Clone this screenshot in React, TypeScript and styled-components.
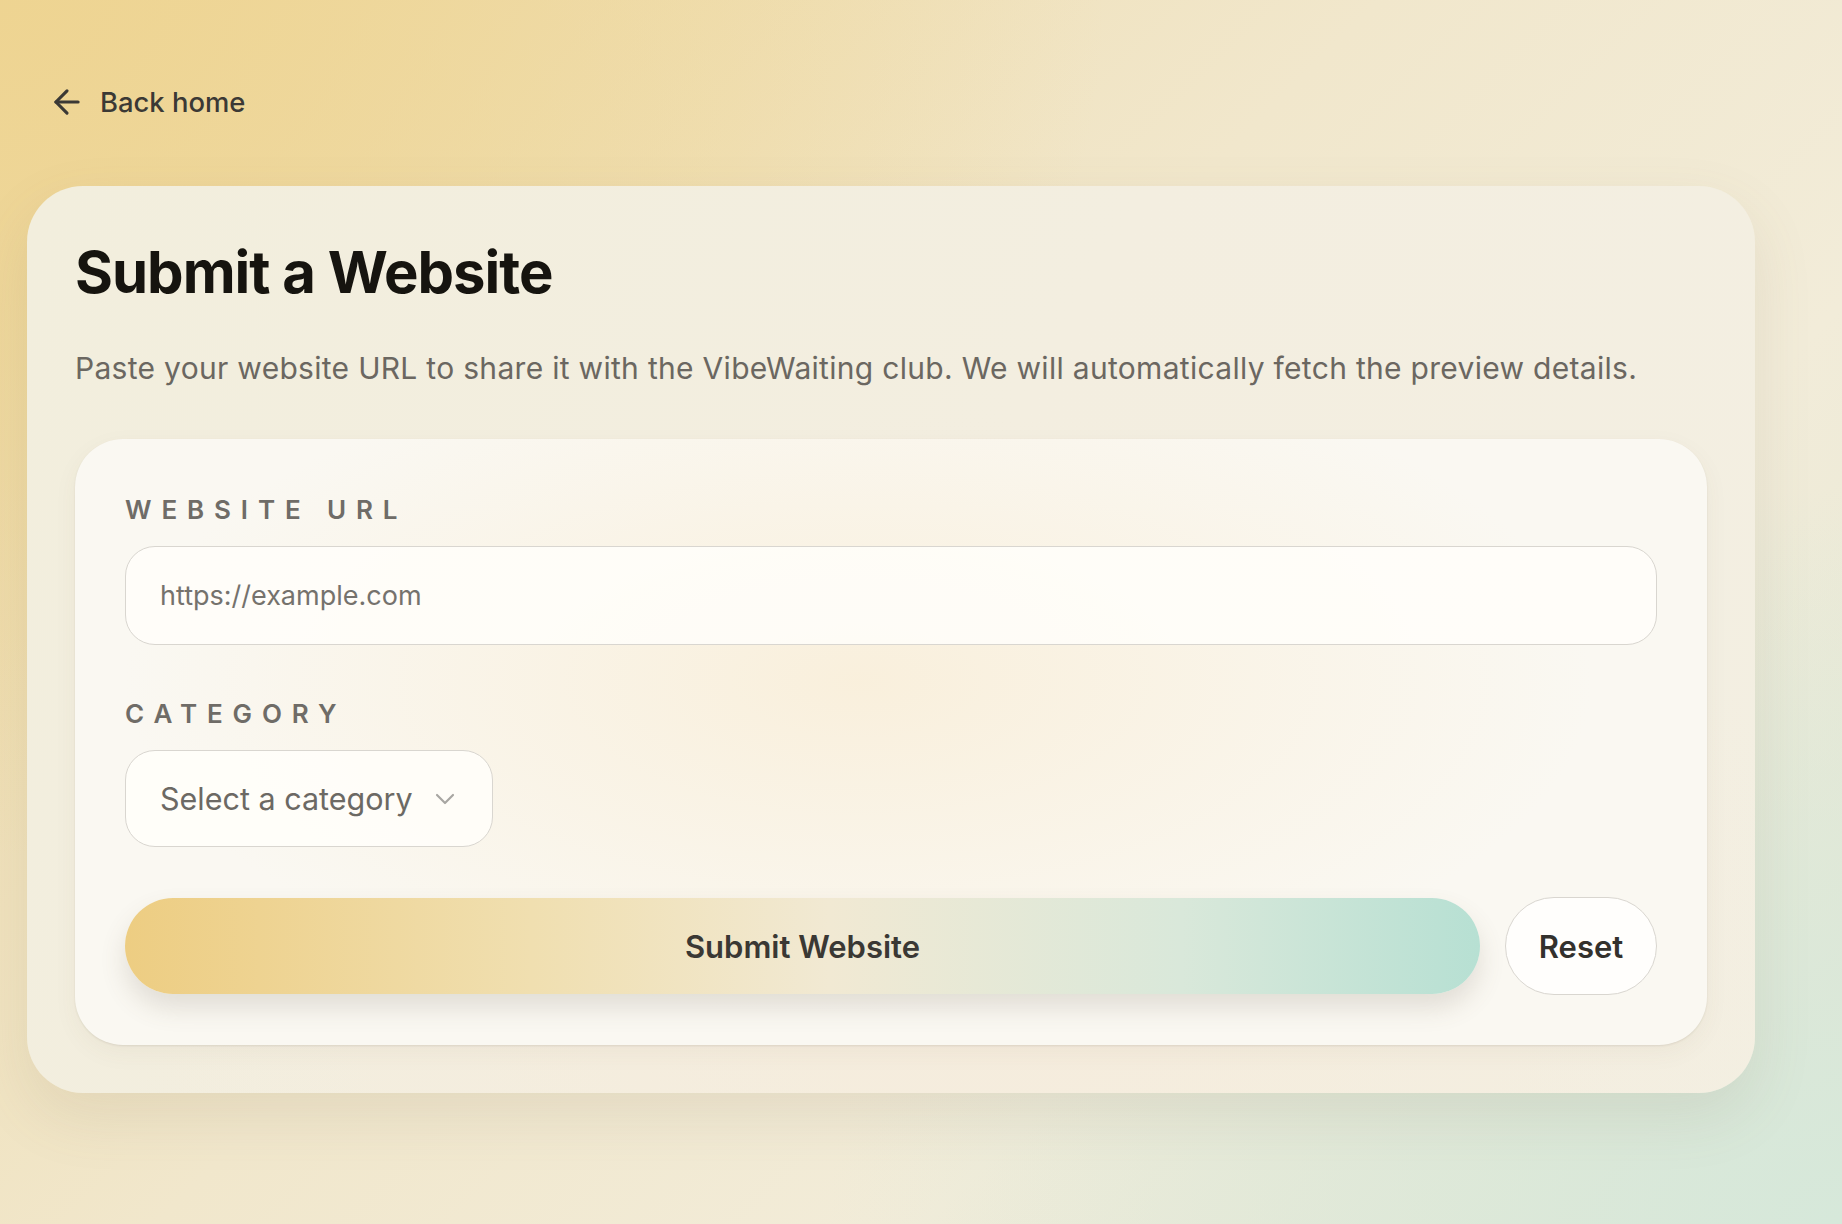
import { useState } from "react";
import styled, { createGlobalStyle } from "styled-components";
import { ArrowLeft, ChevronDown } from "lucide-react";

const GlobalStyle = createGlobalStyle`
  * {
    box-sizing: border-box;
  }

  body {
    margin: 0;
    font-family: Inter, "Noto Sans", "Liberation Sans", sans-serif;
    color: #1a1814;
  }
`;

const Page = styled.main`
  min-height: 100vh;
  padding: 0 0 130px 27px;
  background:
    radial-gradient(ellipse 60% 70% at 0% 0%, rgba(238, 212, 145, 0.95) 0%, rgba(238, 212, 145, 0) 100%),
    radial-gradient(ellipse 55% 60% at 100% 100%, rgba(214, 232, 218, 1) 0%, rgba(214, 232, 218, 0) 100%),
    linear-gradient(135deg, #eed8a0 0%, #f1e7cc 45%, #f2ecd9 70%, #e2e6d4 100%);
`;

const BackLink = styled.a`
  display: inline-flex;
  align-items: center;
  gap: 14px;
  height: 38px;
  margin: 83px 0 0 21px;
  color: #3b3935;
  font-size: 27.4px;
  font-weight: 500;
  text-decoration: none;
  cursor: pointer;
`;

const Card = styled.section`
  width: 1728px;
  margin-top: 61px;
  padding: 50px 48px 48px;
  border-radius: 56px;
  background:
    radial-gradient(ellipse 50% 60% at 55% 85%, rgba(246, 236, 220, 0.9) 0%, rgba(246, 236, 220, 0) 100%),
    linear-gradient(120deg, #f2eedd 0%, #f3eee0 50%, #f3efe2 100%);
  box-shadow: 0 24px 60px rgba(120, 110, 80, 0.12);
`;

const Title = styled.h1`
  margin: 0;
  font-size: 58px;
  line-height: 72px;
  font-weight: 700;
  letter-spacing: -1px;
  color: #16140f;
`;

const Lead = styled.p`
  margin: 38px 0 48px;
  font-size: 30px;
  line-height: 45px;
  letter-spacing: 0.3px;
  color: #6b6761;
`;

const FormCard = styled.form`
  display: flex;
  flex-direction: column;
  padding: 55px 50px 50px;
  border-radius: 48px;
  background:
    radial-gradient(ellipse 45% 55% at 48% 40%, rgba(249, 239, 219, 0.95) 0%, rgba(249, 239, 219, 0) 100%),
    #faf8f2;
  box-shadow:
    0 1px 2px rgba(90, 80, 60, 0.12),
    0 8px 24px rgba(90, 80, 60, 0.05);
`;

const Field = styled.div<{ $last?: boolean }>`
  display: flex;
  flex-direction: column;
  align-items: flex-start;
  gap: 20px;
  margin-bottom: ${(p) => (p.$last ? "50px" : "53px")};
`;

const Label = styled.label`
  font-size: 26px;
  line-height: 32px;
  font-weight: 600;
  letter-spacing: 0.38em;
  text-transform: uppercase;
  color: #6f6c67;
`;

const TextInput = styled.input`
  width: 100%;
  height: 99px;
  padding: 0 34px;
  border: 1.5px solid #d9d6d0;
  border-radius: 30px;
  background: rgba(255, 254, 250, 0.85);
  font-family: inherit;
  font-size: 27px;
  color: #2b2925;
  outline: none;

  &::placeholder {
    color: #75726d;
  }
`;

const SelectButton = styled.button`
  display: inline-flex;
  align-items: center;
  gap: 16px;
  height: 97px;
  padding: 0 31px 0 34px;
  border: 1.5px solid #d9d6d0;
  border-radius: 30px;
  background: rgba(255, 254, 250, 0.9);
  font-family: inherit;
  font-size: 30.5px;
  color: #6c6964;
  cursor: pointer;

  svg {
    color: #a8a6a2;
  }
`;

const Actions = styled.div`
  display: flex;
  align-items: center;
  gap: 25px;
`;

const SubmitButton = styled.button`
  flex: 1;
  height: 96px;
  border: none;
  border-radius: 48px;
  background: linear-gradient(90deg, #edcd82 0%, #f0dfb0 30%, #f1e9d3 52%, #d9e8da 78%, #b7e0d3 100%);
  box-shadow: 0 14px 26px rgba(100, 90, 70, 0.16);
  font-family: inherit;
  font-size: 31px;
  font-weight: 600;
  color: #3a3834;
  cursor: pointer;
`;

const ResetButton = styled.button`
  width: 152px;
  height: 98px;
  border: 1.5px solid #d9d6d0;
  border-radius: 49px;
  background: #fffefc;
  font-family: inherit;
  font-size: 31px;
  font-weight: 600;
  color: #33312d;
  cursor: pointer;
`;

export default function App() {
  const [url, setUrl] = useState("");

  return (
    <>
      <GlobalStyle />
      <Page>
        <BackLink href="#">
          <ArrowLeft size={38} strokeWidth={2} />
          Back home
        </BackLink>
        <Card>
          <Title>Submit a Website</Title>
          <Lead>
            Paste your website URL to share it with the VibeWaiting club. We will automatically fetch the
            preview details.
          </Lead>
          <FormCard onSubmit={(e) => e.preventDefault()}>
            <Field>
              <Label htmlFor="url">Website URL</Label>
              <TextInput
                id="url"
                placeholder="https://example.com"
                value={url}
                onChange={(e) => setUrl(e.target.value)}
              />
            </Field>
            <Field $last>
              <Label>Category</Label>
              <SelectButton type="button">
                Select a category
                <ChevronDown size={32} strokeWidth={1.6} />
              </SelectButton>
            </Field>
            <Actions>
              <SubmitButton type="submit">Submit Website</SubmitButton>
              <ResetButton type="button" onClick={() => setUrl("")}>
                Reset
              </ResetButton>
            </Actions>
          </FormCard>
        </Card>
      </Page>
    </>
  );
}
